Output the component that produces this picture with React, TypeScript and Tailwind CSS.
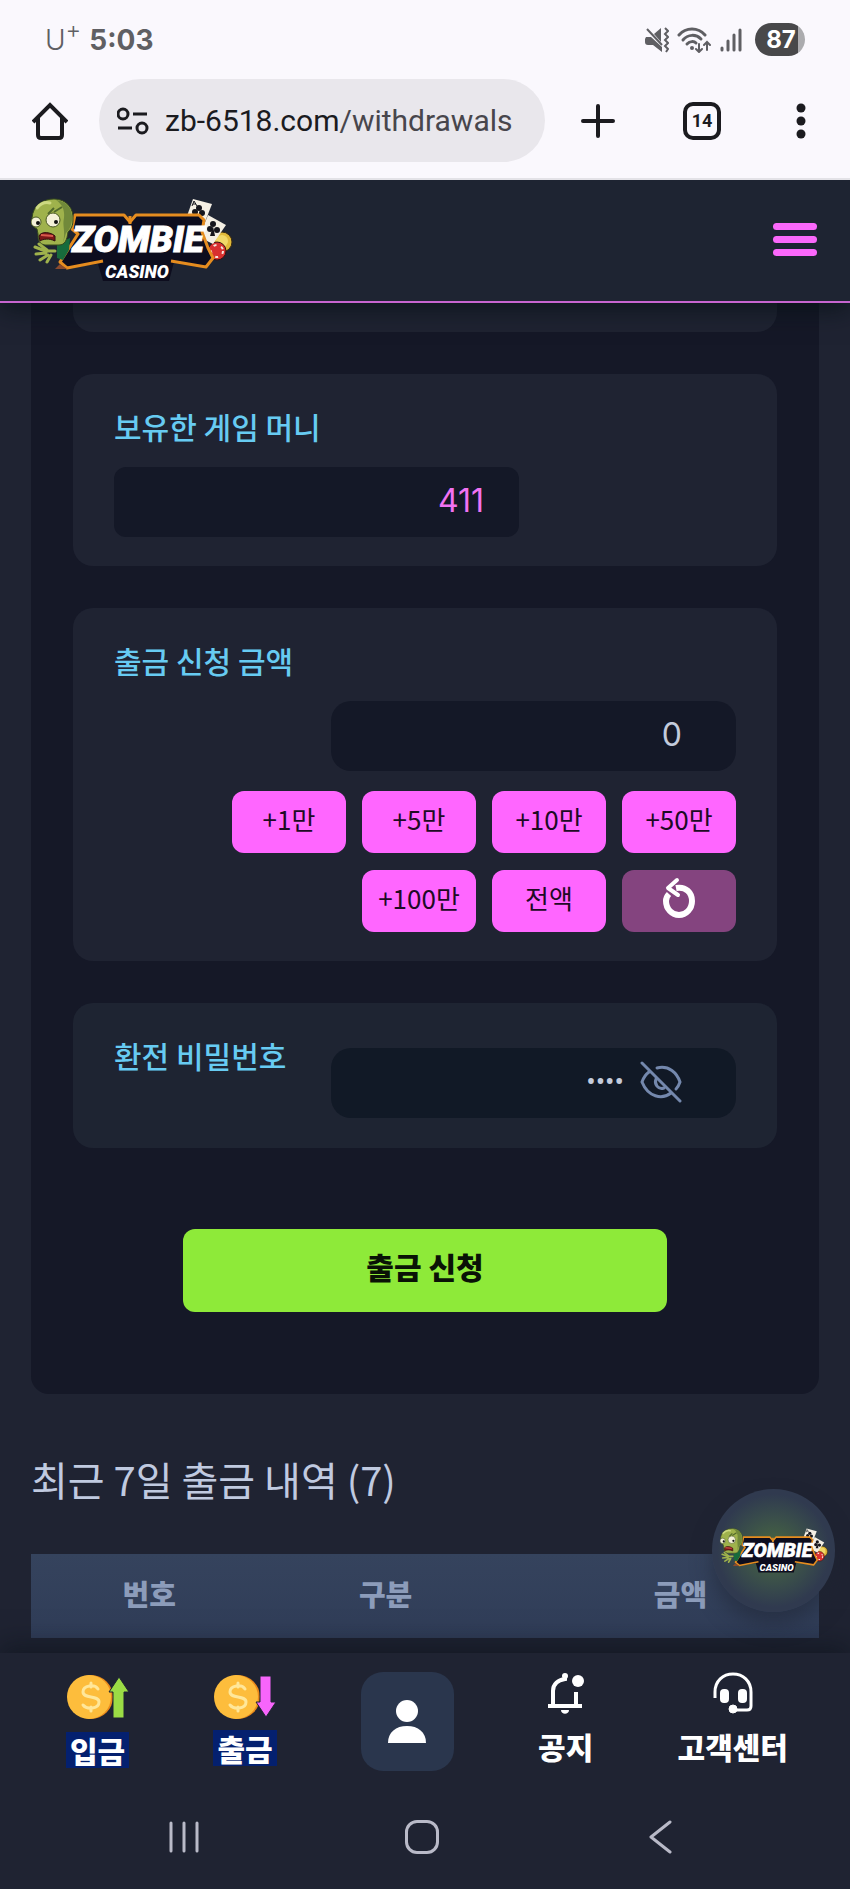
import { useState } from 'react';

const amounts = ['+1만', '+5만', '+10만', '+50만', '+100만', '전액'];

function Logo({ className }: { className?: string }) {
  return (
    <svg viewBox="0 0 202 86" className={className} role="img" aria-label="Zombie Casino">
      {/* cards and chips */}
      <circle cx="191" cy="44" r="10" fill="#e0b93a" stroke="#3a2a10" strokeWidth="1" />
      <circle cx="191" cy="43" r="6" fill="#f1d868" />
      <circle cx="186" cy="53" r="9" fill="#d8302f" stroke="#3a1010" strokeWidth="1" />
      <circle cx="186" cy="53" r="6" fill="none" stroke="#f6e5dc" strokeWidth="2" strokeDasharray="3 5" />
      <path d="M162 1 L181 6 L174 24 L156 18Z" fill="#f4efe4" />
      <path d="M177 17 L195 27 L182 46 L168 39Z" fill="#f4efe4" />
      <g fill="#15151c">
        <circle cx="168" cy="10" r="3" />
        <circle cx="164" cy="14" r="3" />
        <circle cx="171" cy="15" r="3" />
        <circle cx="182" cy="26" r="3" />
        <circle cx="179" cy="31" r="3" />
        <circle cx="186" cy="32" r="3" />
        <path d="M182 28 L179 38 L184 38Z" />
        <path d="M163 3 L161 8 M163 3 L166 8 M162 6 H165" stroke="#15151c" />
      </g>

      {/* name plate */}
      <path d="M44 17 H93 L99 23 L105 17 H168 L173 22 L171 34 L177 50 L182 60 L175 69 L143 64 L138 83 H72 L67 66 L36 70 L29 64 L47 36 L41 31Z" fill="#0d0d1e" />
      <path d="M72 63 L36 70 L29 64 L47 36 L41 31 L44 17 H93 L99 24 L105 17 H168 L173 22 L171 34 L177 50 L182 60 L175 69 L140 63" fill="none" stroke="#e58c1f" strokeWidth="3" strokeLinejoin="round" />
      <path d="M99 18 V26" stroke="#e58c1f" strokeWidth="3" />

      {/* zombie */}
      <path d="M26 46 L39 40 L38 52 L32 62 L26 60Z" fill="#176b3c" />
      <path d="M1 20 C2 7 12 1 23 1 C36 1 43 11 42 22 C42 28 40 31 37 34 C36 42 34 47 28 47 L14 47 C8 46 7 42 7 36 L6 31 C2 29 1 25 1 20Z" fill="#9fb24c" stroke="#34481d" strokeWidth="1" />
      <path d="M25 2 C36 3 42 11 41 22 C40 29 38 32 35 35 L32 45 C35 33 31 28 33 20 C34 12 31 6 25 2Z" fill="#71893a" />
      <path d="M6 10 C10 5 15 4 19 5" stroke="#cdd981" strokeWidth="3" fill="none" strokeLinecap="round" />
      <path d="M23 14 L31 9 M17 16 L23 10" stroke="#50682b" strokeWidth="2" />
      <circle cx="5" cy="24" r="5" fill="#f4f1d8" stroke="#4a5a24" />
      <circle cx="22" cy="22" r="7" fill="#f4f1d8" stroke="#4a5a24" />
      <circle cx="7" cy="25" r="2" fill="#111" />
      <circle cx="25" cy="24" r="2" fill="#111" />
      <path d="M8 38 C10 33 20 34 24 38 L24 43 C18 40 12 41 9 43Z" fill="#7c1818" stroke="#2f1010" />
      <path d="M10 37 L22 38" stroke="#d95a4d" strokeWidth="2" />
      <path d="M4 49 L14 53 L24 53 M5 56 L15 55 M9 62 L17 57 M16 64 L20 57 M8 46 L16 52" stroke="#9fb24c" strokeWidth="3" fill="none" strokeLinecap="round" />
      <path d="M24 71 L29 66 L36 71Z" fill="#8a4a2e" />

      <g className="font-['Roboto',sans-serif]" fontWeight="900" textAnchor="middle" fill="#fff">
        <text x="107" y="54" fontSize="37" fontStyle="italic" stroke="#fff" strokeWidth="1">ZOMBIE</text>
        <text x="106" y="80" fontSize="18" fontStyle="italic">CASINO</text>
      </g>
    </svg>
  );
}

function StatusBar() {
  return (
    <div className="flex h-[79px] items-center justify-between pl-[45px] pr-[45px] font-['Inter',sans-serif] text-[#5f5f63]">
      <div className="flex items-center gap-2">
        <span className="text-[28px] font-light leading-8">U<sup className="text-2xl leading-none">+</sup></span>
        <span className="text-[28px] font-bold leading-8">5:03</span>
      </div>
      <div className="flex items-center gap-2">
        <svg viewBox="0 0 24 26" className="h-[26px] w-6" fill="currentColor">
          <path d="M1 10 H6 L17 20 V25 L8 18 H3 C1 18 0 17 0 15 V12Z" />
          <path d="M16 1 V15 L9 7Z" />
          <path d="M2 2 L17 18" stroke="currentColor" strokeWidth="2" />
          <path d="M20 1 L23 4 L20 7 L23 10 L20 13 L23 16 L20 19 L23 22 L21 25" fill="none" stroke="currentColor" strokeWidth="2" />
        </svg>
        <svg viewBox="0 0 34 26" className="h-[26px] w-[34px]" fill="none" stroke="currentColor" strokeWidth="3" strokeLinecap="round">
          <path d="M2 8 C9 0 21 0 28 8" />
          <path d="M6 13 C11 7 19 7 24 12" />
          <path d="M10 17 C13 14 17 14 19 16" />
          <circle cx="15" cy="21" r="2" fill="currentColor" stroke="none" />
          <path d="M22 17 V24 M19 22 L22 25 L25 22" strokeWidth="2" />
          <path d="M30 23 V16 M27 18 L30 15 L33 18" strokeWidth="2" />
        </svg>
        <svg viewBox="0 0 24 26" className="h-[26px] w-6" stroke="currentColor" strokeWidth="3" strokeLinecap="round">
          <path d="M3 21 V23 M9 14 V23" />
          <path d="M15 8 V23 M21 3 V23" />
        </svg>
        <div className="ml-1 h-[33px] w-[50px] rounded-full bg-linear-to-r from-[#48484a] from-86% to-[#ababae] to-86% pl-0.5 text-center text-2xl font-bold leading-[33px] text-white">
          87
        </div>
      </div>
    </div>
  );
}

function BrowserBar() {
  return (
    <div className="flex items-center pb-4 pl-8 pr-[43px] text-[#1b1b1f]">
      <button type="button" aria-label="Home">
        <svg viewBox="0 0 36 38" className="h-[38px] w-9" fill="none" stroke="currentColor" strokeWidth="4">
          <path d="M1 20 L18 3 L35 20" />
          <path d="M6 16 V33 C6 35 7 36 9 36 H27 C29 36 30 35 30 33 V16" />
        </svg>
      </button>
      <button type="button" className="ml-[31px] flex h-[83px] min-w-0 flex-1 items-center rounded-full bg-[#e9e7ec] pl-[18px]">
        <svg viewBox="0 0 32 28" className="h-7 w-8 shrink-0" fill="none" stroke="currentColor" strokeWidth="3">
          <circle cx="6" cy="7" r="5" />
          <path d="M16 7 H30 M1 21 H15" />
          <circle cx="25" cy="21" r="5" />
        </svg>
        <span className="ml-4 font-['Roboto',sans-serif] text-[30px] leading-10">
          zb-6518.com<span className="text-[#48464c]">/withdrawals</span>
        </span>
      </button>
      <button type="button" aria-label="New tab" className="ml-[35px]">
        <svg viewBox="0 0 36 36" className="size-9" stroke="currentColor" strokeWidth="4" strokeLinecap="round">
          <path d="M18 3 V33 M3 18 H33" />
        </svg>
      </button>
      <button type="button" aria-label="Tabs" className="ml-[67px] size-[38px] rounded-[10px] border-4 border-[#1b1b1f] font-['Roboto',sans-serif] text-lg font-bold leading-[30px]">
        14
      </button>
      <button type="button" aria-label="More" className="ml-[74px]">
        <svg viewBox="0 0 12 36" className="h-9 w-3" fill="currentColor">
          <circle cx="6" cy="5" r="4.500" />
          <circle cx="6" cy="18" r="4.500" />
          <circle cx="6" cy="31" r="4.500" />
        </svg>
      </button>
    </div>
  );
}

function Coin({ up }: { up?: boolean }) {
  return (
    <svg viewBox="0 0 62 50" className="h-[50px] w-[62px]">
      <circle cx="24" cy="25" r="22" fill="#e98a1c" />
      <circle cx="22" cy="25" r="22" fill="#fdbd3c" />
      <path d="M31 17 C28 12 16 13 16 20 C16 27 32 23 32 30 C32 37 20 38 16 33 M24 11 V15 M24 35 V39" fill="none" stroke="#ffe79a" strokeWidth="3" strokeLinecap="round" />
      {up ? (
        <path d="M52 5 L62 20 H57 V46 H46 V20 H42Z" fill="#9bdc45" stroke="#1e2432" strokeWidth="1" />
      ) : (
        <path d="M52 45 L62 30 H57 V4 H46 V30 H42Z" fill="#f765fb" stroke="#1e2432" strokeWidth="1" />
      )}
    </svg>
  );
}

function BottomNav() {
  return (
    <nav className="relative bg-[#1f2332] shadow-[0_-8px_24px_rgba(10,16,24,0.5)]">
      <div className="flex items-start justify-between pb-[14px] pl-[66px] pr-[62px] pt-[19px] text-[30px] font-black leading-9 text-white">
        <a href="#deposit" className="flex flex-col items-center gap-2.5">
          <Coin up />
          <span className="bg-[#04206f] px-1">입금</span>
        </a>
        <a href="#withdraw" className="flex flex-col items-center gap-2">
          <Coin />
          <span className="bg-[#04206f] px-1">출금</span>
        </a>
        <a href="#account" aria-label="My account" className="flex h-[99px] w-[93px] items-center justify-center rounded-[22px] bg-[#2a364d]">
          <svg viewBox="0 0 38 44" className="h-11 w-[38px]" fill="currentColor">
            <circle cx="19" cy="11" r="11" />
            <path d="M0 43 C0 32 8 26 19 26 C30 26 38 32 38 43Z" />
          </svg>
        </a>
        <a href="#notice" className="flex flex-col items-center gap-3.5">
          <svg viewBox="0 0 38 42" className="h-[42px] w-[38px]" fill="none" stroke="currentColor" strokeWidth="4">
            <path d="M1 34 H35 M6 33 V19 C6 12 11 8 18 7 V2 M29 20 V33" />
            <circle cx="18" cy="4" r="3" fill="currentColor" stroke="none" />
            <circle cx="31" cy="9" r="6" fill="currentColor" stroke="none" />
            <path d="M14 38 H22 C22 43 14 43 14 38Z" fill="currentColor" stroke="none" />
          </svg>
          <span>공지</span>
        </a>
        <a href="#support" className="flex flex-col items-center gap-3.5">
          <svg viewBox="0 0 40 42" className="h-[42px] w-10" fill="none" stroke="currentColor" strokeWidth="3">
            <path d="M2 26 V20 C2 9 10 2 20 2 C30 2 38 9 38 20 V34 C38 37 36 38 34 38 H20" />
            <rect x="7" y="17" width="9" height="14" rx="4" fill="currentColor" stroke="none" />
            <rect x="25" y="17" width="9" height="14" rx="4" fill="currentColor" stroke="none" />
            <circle cx="20" cy="37" r="4" fill="currentColor" stroke="currentColor" strokeWidth="1" />
          </svg>
          <span>고객센터</span>
        </a>
      </div>

      {/* system buttons */}
      <div className="flex h-[104px] items-center justify-between pl-[167px] pr-[173px] text-[#b9bac8]">
        <button type="button" aria-label="Recent apps">
          <svg viewBox="0 0 34 34" className="size-[34px]" stroke="currentColor" strokeWidth="3" strokeLinecap="round">
            <path d="M4 3 V31 M17 3 V31 M30 3 V31" />
          </svg>
        </button>
        <button type="button" aria-label="Home screen" className="size-[34px] rounded-xl border-[3px] border-[#b9bac8]" />
        <button type="button" aria-label="Back">
          <svg viewBox="0 0 34 34" className="size-[34px]" fill="none" stroke="currentColor" strokeWidth="3" strokeLinecap="round" strokeLinejoin="round">
            <path d="M27 2 L8 17 L27 32" />
          </svg>
        </button>
      </div>
    </nav>
  );
}

export default function App() {
  const [amount, setAmount] = useState('0');
  const [showPassword, setShowPassword] = useState(false);

  return (
    <div className="relative bg-[#1f2332] font-['Noto_Sans_CJK_KR',sans-serif]">
      <div className="relative z-20 border-b-2 border-[#e3e2e7] bg-[#faf8fd]">
        <StatusBar />
        <BrowserBar />
      </div>

      {/* Site header */}
      <header className="relative z-10 flex h-[123px] items-center justify-between border-b-2 border-[#c765d0] bg-[#1e2432] pl-[31px] pr-[33px] shadow-[0_6px_24px_rgba(6,16,20,0.7)]">
        <a href="#home">
          <Logo className="h-[86px] w-[202px]" />
        </a>
        <button type="button" aria-label="Menu" className="flex w-11 flex-col gap-1.5 pb-0.5">
          <span className="h-[7px] rounded-full bg-[#fb68fb]" />
          <span className="h-[7px] rounded-full bg-[#fb68fb]" />
          <span className="h-[7px] rounded-full bg-[#fb68fb]" />
        </button>
      </header>

      <main className="px-[31px] pb-[15px]">
        {/* Withdrawal form */}
        <form className="flex flex-col gap-[42px] rounded-b-[18px] bg-[#151827] px-[42px] pb-[82px]" onSubmit={(e) => e.preventDefault()}>
          <div className="h-[29px] rounded-b-[20px] bg-[#1f2332]" />

          <section className="rounded-[20px] bg-[#1f2332] px-[41px] pb-[29px] pt-8">
            <label htmlFor="balance" className="mb-[21px] block text-[30px] font-medium leading-10 text-[#67cbf2]">보유한 게임 머니</label>
            <input
              id="balance"
              readOnly
              value="411"
              className="block h-[70px] w-[405px] rounded-xl bg-[#141827] pb-1 pr-[35px] text-right font-['Inter',sans-serif] text-[32px] text-[#f272f2]"
            />
          </section>

          <section className="rounded-[20px] bg-[#1f2332] px-[41px] pb-[29px] pt-8">
            <label htmlFor="amount" className="mb-[21px] block text-[30px] font-medium leading-10 text-[#67cbf2]">출금 신청 금액</label>
            <input
              id="amount"
              value={amount}
              onChange={(e) => setAmount(e.target.value)}
              className="ml-auto block h-[70px] w-[405px] rounded-[20px] bg-[#141827] pb-1 pr-[54px] text-right font-['Inter',sans-serif] text-[32px] text-[#c3cbdc]"
            />
            <div className="mt-5 flex flex-wrap justify-end gap-x-4 gap-y-[17px] pl-[100px]">
              {amounts.map((label) => (
                <button key={label} type="button" className="h-[62px] w-[114px] rounded-xl bg-[#ff66ff] pb-1.5 text-[26px] leading-8 text-[#200a24]">
                  {label}
                </button>
              ))}
              <button type="button" aria-label="Reset" onClick={() => setAmount('0')} className="flex h-[62px] w-[114px] items-center justify-center rounded-xl bg-[#84447f] pb-1.5 text-white">
                <svg viewBox="0 0 36 42" className="h-[42px] w-9" fill="none" stroke="currentColor" strokeWidth="6">
                  <path d="M15 11 C25 9 31 16 31 24 C31 32 25 38 18 38 C11 38 5 32 5 24 C5 21 6 19 8 17" />
                  <path d="M16 3 L7 11 L17 18" strokeWidth="4" strokeLinejoin="round" strokeLinecap="round" />
                </svg>
              </button>
            </div>
          </section>

          <section className="flex items-start justify-between rounded-[20px] bg-[#1e2432] px-[41px] pb-[30px] pt-8">
            <label htmlFor="password" className="text-[30px] font-medium leading-10 text-[#67cbf2]">환전 비밀번호</label>
            <div className="mt-[13px] flex h-[70px] w-[405px] items-center gap-4 rounded-[20px] bg-[#111926] pb-0.5 pr-[54px]">
              <input
                id="password"
                type={showPassword ? 'text' : 'password'}
                defaultValue="0000"
                className="min-w-0 flex-1 text-right font-['Roboto',sans-serif] text-[28px] text-[#c3cbdc]"
              />
              <button type="button" aria-label="Show password" onClick={() => setShowPassword(!showPassword)} className="text-[#7488ad]">
                <svg viewBox="0 0 42 42" className="size-[42px]" fill="none" stroke="currentColor" strokeWidth="3" strokeLinecap="round">
                  <path d="M2 2 L40 40" />
                  <path d="M17 7 C29 4 37 12 40 21 C39 24 38 26 36 28" />
                  <path d="M9 11 C5 14 3 18 2 21 C8 36 22 39 31 32" />
                  <path d="M16 18 C14 23 18 29 24 27" />
                </svg>
              </button>
            </div>
          </section>

          <button type="submit" className="mx-[110px] mt-[39px] h-[83px] rounded-xl bg-[#8eea39] pb-2.5 text-[30px] font-black leading-10 text-[#0a1206]">
            출금 신청
          </button>
        </form>

        {/* History */}
        <h2 className="mb-[51px] mt-[61px] text-[40px] leading-[48px] text-[#c0cae0]">최근 7일 출금 내역 (7)</h2>
        <table className="w-full table-fixed">
          <thead>
            <tr className="h-[84px] bg-linear-to-b from-[#35435d] to-[#303d58] text-[29px] leading-10 text-[#8c9cba]">
              <th className="w-[30%] pb-1.5 font-black">번호</th>
              <th className="w-[30%] pb-1.5 font-black">구분</th>
              <th className="pb-1.5 pl-[38px] font-black">금액</th>
            </tr>
          </thead>
        </table>
      </main>

      <BottomNav />

      {/* floating shortcut */}
      <a href="#casino" className="absolute bottom-[277px] right-[15px] flex size-[123px] items-center justify-center rounded-full bg-radial from-[#4a6a3d] to-[#303a4f] to-65% shadow-[0_12px_20px_rgba(30,36,50,0.5)]">
        <Logo className="h-[46px] w-[108px]" />
      </a>
    </div>
  );
}
